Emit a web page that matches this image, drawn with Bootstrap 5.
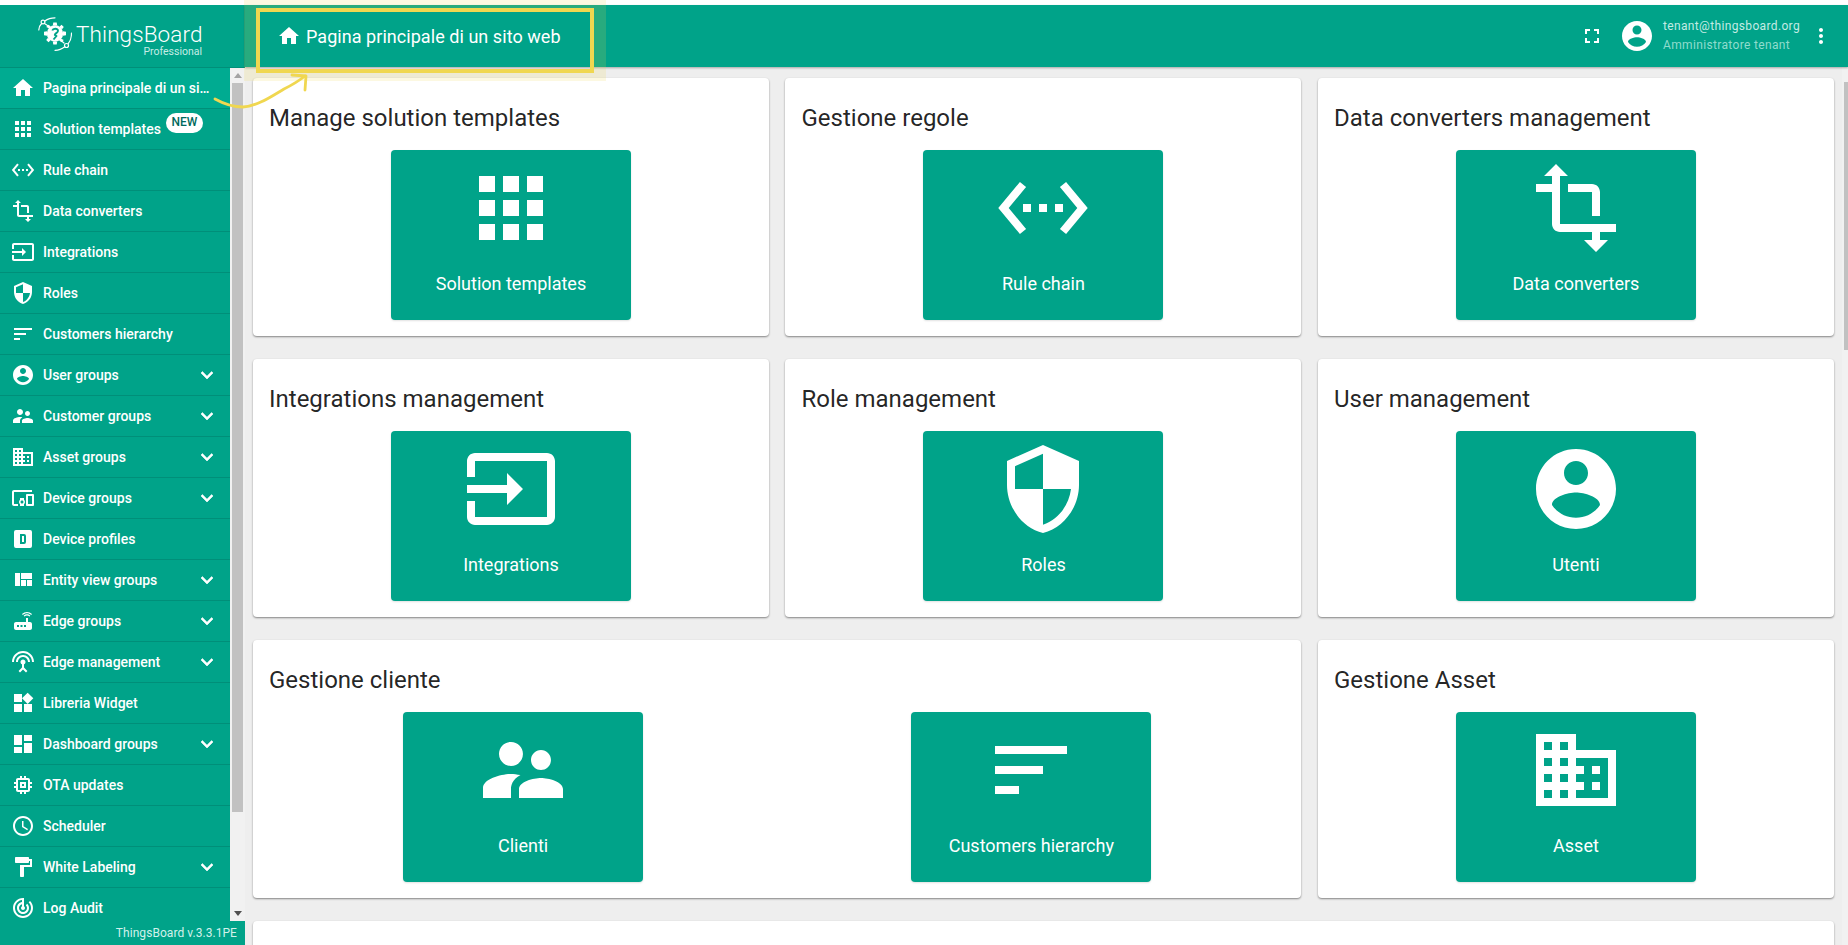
<!DOCTYPE html>
<html lang="it">
<head>
<meta charset="utf-8">
<title>ThingsBoard</title>
<link href="https://cdn.jsdelivr.net/npm/bootstrap@5.3.0/dist/css/bootstrap.min.css" rel="stylesheet">
<style>
html,body{height:100%;}
body{margin:0;overflow:hidden;background:#fff;padding-top:5px;font-family:Roboto,"Liberation Sans",sans-serif;color:rgba(0,0,0,.87);}
.tb-shell{height:940px;background:#eee;position:relative;}
.tb-side{width:245px;background:#00a389;color:#fff;flex:none;}
.tb-brand{height:63px;border-bottom:1px solid #008f79;padding:12px 0 0 38px;}
.tb-brand-name{font-size:22.5px;font-weight:300;line-height:28px;color:#fff;letter-spacing:.1px;}
.tb-brand-sub{font-size:10.5px;line-height:10px;color:#c6ece5;text-align:right;font-weight:400;margin-top:-1px;}
.tb-brand-text{width:126px;margin-left:4px;margin-top:3px;}
.tb-logo{width:34px;height:34px;flex:none;}
.tb-navwrap{flex:1 1 0;min-height:0;}
.tb-list{width:230px;overflow:hidden;border-radius:0;}
.tb-item{height:41px;flex:none;padding:0 11px;background:transparent;color:#fff;border:0;border-bottom:1px solid #008f79;border-radius:0;font-size:14px;font-weight:500;position:relative;text-decoration:none;letter-spacing:0;}
.tb-item.tb-on{background:#00ab91;}
.tb-ico{width:24px;height:24px;fill:#fff;flex:none;}
.tb-label{margin-left:8px;max-width:169px;}
.tb-chev{width:24px;height:24px;fill:#fff;stroke:#fff;stroke-width:.6px;position:absolute;left:194.500px;top:8px;}
.tb-new{position:absolute;left:166px;top:4px;width:37px;height:20px;border-radius:10px;background:#fff;color:#00695c;font-size:12px;font-weight:500;line-height:19px;text-align:center;padding:0;}
.tb-sb{width:15px;background:#f1f1f1;flex:none;}
.tb-sb-up,.tb-sb-down{height:15px;flex:none;}
.tb-tri{width:0;height:0;margin:5px auto 0;border-left:4px solid transparent;border-right:4px solid transparent;}
.tb-tri.up{border-bottom:5px solid #a3a3a3;}
.tb-tri.dn{border-top:5px solid #505050;}
.tb-thumb{background:#c1c1c1;width:11px;height:729px;margin:0 auto;}
.tb-ver{height:24px;flex:none;font-size:12px;line-height:24px;text-align:right;padding-right:8px;color:#d2f1eb;letter-spacing:.05px;}
.tb-main{min-width:0;}
.tb-top{height:62px;background:#00a389;box-shadow:0 1px 2px rgba(0,0,0,.3);color:#fff;flex:none;position:relative;z-index:2;padding:0 15px 0 32px;}
.tb-crumb-ico{width:24px;height:24px;fill:#fff;margin-top:-1px;}
.tb-crumb{font-size:18px;margin-left:5px;letter-spacing:.05px;line-height:24px;margin-top:2px;}
.tb-full{width:24px;height:24px;fill:#fff;}
.tb-ava{width:36px;height:36px;fill:#fff;margin-left:15px;}
.tb-user{margin-left:8px;line-height:19px;font-size:12px;letter-spacing:.35px;}
.tb-mail{color:#c3ebe4;}
.tb-role{color:#8fdccd;}
.tb-kebab{width:24px;height:24px;fill:#fff;margin-left:9px;}
.tb-body{min-height:0;}
.tb-scroll{flex:1 1 0;min-width:0;overflow:hidden;padding:11px 8px 0 8px;}
.tb-grid{--bs-gutter-x:16.5px;--bs-gutter-y:23px;margin-top:0;}
.tb-grid>*{margin-top:0;margin-bottom:23px;}
.tb-card{background:#fff;border-radius:4px;padding:16px;height:258px;box-shadow:0 1px 2px rgba(0,0,0,.45);border:0;}
.tb-title{font-size:24px;line-height:48px;font-weight:400;margin:0 0 8px;color:rgba(0,0,0,.87);}
.tb-tile{width:240px;height:170px;background:#00a389;color:#fff;border-radius:4px;margin:0 auto;padding-top:10px;text-align:center;font-size:18px;font-weight:400;letter-spacing:0;box-shadow:0 1px 2px rgba(0,0,0,.12);}
.tb-tile svg{width:96px;height:96px;fill:#fff;display:block;margin:0 auto;}
.tb-tile-text{margin-top:16px;line-height:24px;}
.tb-rail{width:6px;background:#f1f1f1;flex:none;}
.tb-rail-up{height:15px;}
.tb-rail-thumb{height:268px;width:4px;background:#c1c1c1;margin-left:2px;}
.tb-mark{position:absolute;left:244px;top:-5px;width:362px;height:81px;border:solid rgba(240,215,80,.17);border-width:8px 12px;z-index:5;pointer-events:none;}
.tb-mark-in{height:100%;border:4.5px solid #f0d750;}
.tb-arrow{position:absolute;left:0;top:-5px;width:400px;height:140px;z-index:6;pointer-events:none;}
</style>
</head>
<body>
<svg width="0" height="0" class="position-absolute" aria-hidden="true">
<symbol id="i-home" viewBox="0 0 24 24"><path d="M10 20v-6h4v6h5v-8h3L12 3 2 12h3v8z"/></symbol>
<symbol id="i-apps" viewBox="0 0 24 24"><path d="M4 8h4V4H4v4zm6 12h4v-4h-4v4zm-6 0h4v-4H4v4zm0-6h4v-4H4v4zm6 0h4v-4h-4v4zm6-10v4h4V4h-4zm-6 4h4V4h-4v4zm6 6h4v-4h-4v4zm0 6h4v-4h-4v4z"/></symbol>
<symbol id="i-rule" viewBox="0 0 24 24"><path d="M7.77 6.76L6.23 5.48.82 12l5.41 6.52 1.54-1.28L3.42 12l4.35-5.24zM7 13h2v-2H7v2zm10-2h-2v2h2v-2zm-6 2h2v-2h-2v2zm6.77-7.52l-1.54 1.28L20.58 12l-4.35 5.24 1.54 1.28L23.18 12l-5.41-6.52z"/></symbol>
<symbol id="i-transform" viewBox="0 0 24 24"><path d="M22 18v-2H8V4h2L7 1 4 4h2v2H2v2h4v8c0 1.1.9 2 2 2h8v2h-2l3 3 3-3h-2v-2h4zM10 8h6v6h2V8c0-1.1-.9-2-2-2h-6v2z"/></symbol>
<symbol id="i-input" viewBox="0 0 24 24"><path d="M21 3.01H3c-1.1 0-2 .9-2 2V9h2V4.99h18v14.03H3V15H1v4.01c0 1.1.9 1.98 2 1.98h18c1.1 0 2-.88 2-1.98v-14c0-1.11-.9-2-2-2zM11 16l4-4-4-4v3H1v2h10v3z"/></symbol>
<symbol id="i-shield" viewBox="0 0 24 24"><path d="M12 1L3 5v6c0 5.55 3.84 10.74 9 12 5.16-1.26 9-6.45 9-12V5l-9-4zm0 10.99h7c-.53 4.12-3.28 7.79-7 8.94V12H5V6.3l7-3.11v8.8z"/></symbol>
<symbol id="i-sort" viewBox="0 0 24 24"><path d="M3 18h6v-2H3v2zM3 6v2h18V6H3zm0 7h12v-2H3v2z"/></symbol>
<symbol id="i-user" viewBox="0 0 24 24"><path d="M12 2C6.48 2 2 6.48 2 12s4.48 10 10 10 10-4.48 10-10S17.52 2 12 2zm0 3c1.66 0 3 1.34 3 3s-1.34 3-3 3-3-1.34-3-3 1.34-3 3-3zm0 14.2c-2.5 0-4.71-1.28-6-3.22.03-1.99 4-3.08 6-3.08 1.99 0 5.97 1.09 6 3.08-1.29 1.94-3.5 3.22-6 3.22z"/></symbol>
<symbol id="i-people" viewBox="0 0 24 24"><path d="M16.5 12c1.38 0 2.49-1.12 2.49-2.5S17.88 7 16.5 7C15.12 7 14 8.12 14 9.5s1.12 2.5 2.5 2.5zM9 11c1.66 0 2.99-1.34 2.99-3S10.66 5 9 5C7.34 5 6 6.34 6 8s1.34 3 3 3zm7.5 3c-1.83 0-5.5.92-5.5 2.75V19h11v-2.25c0-1.83-3.67-2.75-5.5-2.75zM9 13c-2.33 0-7 1.17-7 3.5V19h7v-2.25c0-.85.33-2.34 2.37-3.47C10.5 13.1 9.66 13 9 13z"/></symbol>
<symbol id="i-domain" viewBox="0 0 24 24"><path d="M12 7V3H2v18h20V7H12zM6 19H4v-2h2v2zm0-4H4v-2h2v2zm0-4H4V9h2v2zm0-4H4V5h2v2zm4 12H8v-2h2v2zm0-4H8v-2h2v2zm0-4H8V9h2v2zm0-4H8V5h2v2zm10 12h-8v-2h2v-2h-2v-2h2v-2h-2V9h8v10zm-2-8h-2v2h2v-2zm0 4h-2v2h2v-2z"/></symbol>
<symbol id="i-devices" viewBox="0 0 24 24"><path d="M3 6h18V4H3c-1.1 0-2 .9-2 2v12c0 1.1.9 2 2 2h4v-2H3V6zm10 6H9v1.78c-.61.55-1 1.33-1 2.22s.39 1.67 1 2.22V20h4v-1.78c.61-.55 1-1.34 1-2.22s-.39-1.67-1-2.22V12zm-2 5.5c-.83 0-1.5-.67-1.5-1.5s.67-1.5 1.5-1.5 1.5.67 1.5 1.5-.67 1.5-1.5 1.5zM22 8h-6c-.5 0-1 .5-1 1v10c0 .5.5 1 1 1h6c.5 0 1-.5 1-1V9c0-.5-.5-1-1-1zm-1 10h-4v-8h4v8z"/></symbol>
<symbol id="i-dbox" viewBox="0 0 24 24"><path fill-rule="evenodd" d="M9,7V17H13A2,2 0 0,0 15,15V9A2,2 0 0,0 13,7H9M11,9H13V15H11V9M5,3H19A2,2 0 0,1 21,5V19A2,2 0 0,1 19,21H5A2,2 0 0,1 3,19V5A2,2 0 0,1 5,3Z"/></symbol>
<symbol id="i-quilt" viewBox="0 0 24 24"><path d="M10 18h5v-6h-5v6zm-6 0h5V5H4v13zm12 0h5v-6h-5v6zM10 5v6h11V5H10z"/></symbol>
<symbol id="i-router" viewBox="0 0 24 24"><path d="M20.2 5.9l.8-.8C19.6 3.7 17.8 3 16 3s-3.6.7-5 2.1l.8.8C13 4.8 14.5 4.2 16 4.2s3 .6 4.2 1.7zm-.9.8c-.9-.9-2.1-1.4-3.3-1.4s-2.4.5-3.3 1.4l.8.8c.7-.7 1.6-1 2.5-1 .9 0 1.8.3 2.5 1l.8-.8zM19 13h-2V9h-2v4H5c-1.1 0-2 .9-2 2v4c0 1.1.9 2 2 2h14c1.1 0 2-.9 2-2v-4c0-1.1-.9-2-2-2zM8 18H6v-2h2v2zm3.5 0h-2v-2h2v2zm3.5 0h-2v-2h2v2z"/></symbol>
<symbol id="i-antenna" viewBox="0 0 24 24"><path d="M12 5c-3.87 0-7 3.13-7 7h2c0-2.76 2.24-5 5-5s5 2.24 5 5h2c0-3.87-3.13-7-7-7zm1 9.29c.88-.39 1.5-1.26 1.5-2.29 0-1.38-1.12-2.5-2.5-2.5S9.5 10.62 9.5 12c0 1.02.62 1.9 1.5 2.29v3.3L7.59 21 9 22.41l3-3 3 3L16.41 21 13 17.59v-3.3zM12 1C5.93 1 1 5.93 1 12h2c0-4.97 4.03-9 9-9s9 4.03 9 9h2c0-6.07-4.93-11-11-11z"/></symbol>
<symbol id="i-widgets" viewBox="0 0 24 24"><path d="M13 13v8h8v-8h-8zM3 21h8v-8H3v8zM3 3v8h8V3H3zm13.66-1.31L11 7.34 16.66 13l5.66-5.66-5.66-5.65z"/></symbol>
<symbol id="i-dash" viewBox="0 0 24 24"><path d="M3 13h8V3H3v10zm0 8h8v-6H3v6zm10 0h8V11h-8v10zm0-18v6h8V3h-8z"/></symbol>
<symbol id="i-memory" viewBox="0 0 24 24"><path d="M15 9H9v6h6V9zm-2 4h-2v-2h2v2zm8-2V9h-2V7c0-1.1-.9-2-2-2h-2V3h-2v2h-2V3H9v2H7c-1.1 0-2 .9-2 2v2H3v2h2v2H3v2h2v2c0 1.1.9 2 2 2h2v2h2v-2h2v2h2v-2h2c1.1 0 2-.9 2-2v-2h2v-2h-2v-2h2zm-4 6H7V7h10v10z"/></symbol>
<symbol id="i-clock" viewBox="0 0 24 24"><path d="M11.99 2C6.47 2 2 6.48 2 12s4.47 10 9.99 10C17.52 22 22 17.52 22 12S17.52 2 11.99 2zM12 20c-4.42 0-8-3.58-8-8s3.58-8 8-8 8 3.58 8 8-3.58 8-8 8zm.5-13H11v6l5.25 3.15.75-1.23-4.5-2.67z"/></symbol>
<symbol id="i-paint" viewBox="0 0 24 24"><path d="M18 4V3c0-.55-.45-1-1-1H5c-.55 0-1 .45-1 1v4c0 .55.45 1 1 1h12c.55 0 1-.45 1-1V6h1v4H9v11c0 .55.45 1 1 1h2c.55 0 1-.45 1-1v-9h8V4h-3z"/></symbol>
<symbol id="i-track" viewBox="0 0 24 24"><path d="M19.07 4.93l-1.41 1.41C19.1 7.79 20 9.79 20 12c0 4.42-3.58 8-8 8s-8-3.58-8-8c0-4.08 3.05-7.44 7-7.93v2.02C8.16 6.57 6 9.03 6 12c0 3.31 2.69 6 6 6s6-2.69 6-6c0-1.66-.67-3.16-1.76-4.24l-1.41 1.41C15.55 9.9 16 10.89 16 12c0 2.21-1.79 4-4 4s-4-1.79-4-4c0-1.86 1.28-3.41 3-3.86v2.14c-.6.35-1 .98-1 1.72 0 1.1.9 2 2 2s2-.9 2-2c0-.74-.4-1.38-1-1.72V2h-1C6.48 2 2 6.48 2 12s4.48 10 10 10 10-4.48 10-10c0-2.76-1.12-5.26-2.93-7.07z"/></symbol>
<symbol id="i-more" viewBox="0 0 24 24"><path d="M16.59 8.59L12 13.17 7.41 8.59 6 10l6 6 6-6z"/></symbol>
<symbol id="i-full" viewBox="0 0 24 24"><path d="M7 14H5v5h5v-2H7v-3zm-2-4h2V7h3V5H5v5zm12 7h-3v2h5v-5h-2v3zM14 5v2h3v3h2V5h-5z"/></symbol>
<symbol id="i-vert" viewBox="0 0 24 24"><path d="M12 8c1.1 0 2-.9 2-2s-.9-2-2-2-2 .9-2 2 .9 2 2 2zm0 2c-1.1 0-2 .9-2 2s.9 2 2 2 2-.9 2-2-.9-2-2-2zm0 6c-1.1 0-2 .9-2 2s.9 2 2 2 2-.9 2-2-.9-2-2-2z"/></symbol>
</svg>

<div class="tb-shell d-flex">
  <aside class="tb-side d-flex flex-column">
    <div class="tb-brand d-flex align-items-start">
      <svg class="tb-logo" viewBox="0 0 34 34">
        <g fill="none" stroke="#fff" stroke-width="1.200" stroke-linecap="round">
          <path d="M.8 13 C1 10 2 8 3.700 6.500"/><circle cx="5" cy="5" r="1.900"/><path d="M6.800 4 C9.500 2 13 .8 17 .8"/>
          <path d="M33.500 16 C33.500 20 32.500 24 30.300 26.500"/><circle cx="28.500" cy="28.500" r="2"/><path d="M26.800 29.800 C24 32 21 33.300 17 33.300"/>
          <path d="M6.500 6.500 L11 9.500"/><path d="M26 26 L23 23.500"/>
        </g>
        <g fill="#fff">
          <circle cx="17" cy="16.500" r="8.200"/>
          <path d="M15.300 5.500h3.400l.5 3h-4.400zM23.500 7.700l2.300 2.300-1.800 2.300-2.800-2.300zM28 14.800v3.400l-3 .5v-4.400zM25.800 23l-2.300 2.300-2.300-1.800-.1-2.800zM18.700 27.500h-3.400l-.5-3h4.400zM10.500 25.300l-2.300-2.300 1.800-2.300 2.800 2.300zM6 18.200v-3.400l3-.5v4.400zM8.200 10l2.300-2.300 2.300 1.800.1 2.800z"/>
        </g>
        <path d="M14.300 13.500 C15 11.200 19.500 11 20 13.500 C20.400 15.700 17.300 15.800 16.800 18 L18.500 19 L15.500 22.500" fill="none" stroke="#00a389" stroke-width="1.900" stroke-linejoin="round"/>
      </svg>
      <div class="tb-brand-text">
        <div class="tb-brand-name">ThingsBoard</div>
        <div class="tb-brand-sub">Professional</div>
      </div>
    </div>
    <div class="tb-navwrap d-flex">
      <div class="list-group tb-list flex-nowrap">
        <a class="list-group-item tb-item tb-on d-flex align-items-center"><svg class="tb-ico"><use href="#i-home"/></svg><span class="tb-label text-truncate">Pagina principale di un sito web</span></a>
        <a class="list-group-item tb-item d-flex align-items-center"><svg class="tb-ico"><use href="#i-apps"/></svg><span class="tb-label">Solution templates</span><span class="tb-new">NEW</span></a>
        <a class="list-group-item tb-item d-flex align-items-center"><svg class="tb-ico"><use href="#i-rule"/></svg><span class="tb-label">Rule chain</span></a>
        <a class="list-group-item tb-item d-flex align-items-center"><svg class="tb-ico"><use href="#i-transform"/></svg><span class="tb-label">Data converters</span></a>
        <a class="list-group-item tb-item d-flex align-items-center"><svg class="tb-ico"><use href="#i-input"/></svg><span class="tb-label">Integrations</span></a>
        <a class="list-group-item tb-item d-flex align-items-center"><svg class="tb-ico"><use href="#i-shield"/></svg><span class="tb-label">Roles</span></a>
        <a class="list-group-item tb-item d-flex align-items-center"><svg class="tb-ico"><use href="#i-sort"/></svg><span class="tb-label">Customers hierarchy</span></a>
        <a class="list-group-item tb-item d-flex align-items-center"><svg class="tb-ico"><use href="#i-user"/></svg><span class="tb-label">User groups</span><svg class="tb-chev"><use href="#i-more"/></svg></a>
        <a class="list-group-item tb-item d-flex align-items-center"><svg class="tb-ico"><use href="#i-people"/></svg><span class="tb-label">Customer groups</span><svg class="tb-chev"><use href="#i-more"/></svg></a>
        <a class="list-group-item tb-item d-flex align-items-center"><svg class="tb-ico"><use href="#i-domain"/></svg><span class="tb-label">Asset groups</span><svg class="tb-chev"><use href="#i-more"/></svg></a>
        <a class="list-group-item tb-item d-flex align-items-center"><svg class="tb-ico"><use href="#i-devices"/></svg><span class="tb-label">Device groups</span><svg class="tb-chev"><use href="#i-more"/></svg></a>
        <a class="list-group-item tb-item d-flex align-items-center"><svg class="tb-ico"><use href="#i-dbox"/></svg><span class="tb-label">Device profiles</span></a>
        <a class="list-group-item tb-item d-flex align-items-center"><svg class="tb-ico"><use href="#i-quilt"/></svg><span class="tb-label">Entity view groups</span><svg class="tb-chev"><use href="#i-more"/></svg></a>
        <a class="list-group-item tb-item d-flex align-items-center"><svg class="tb-ico"><use href="#i-router"/></svg><span class="tb-label">Edge groups</span><svg class="tb-chev"><use href="#i-more"/></svg></a>
        <a class="list-group-item tb-item d-flex align-items-center"><svg class="tb-ico"><use href="#i-antenna"/></svg><span class="tb-label">Edge management</span><svg class="tb-chev"><use href="#i-more"/></svg></a>
        <a class="list-group-item tb-item d-flex align-items-center"><svg class="tb-ico"><use href="#i-widgets"/></svg><span class="tb-label">Libreria Widget</span></a>
        <a class="list-group-item tb-item d-flex align-items-center"><svg class="tb-ico"><use href="#i-dash"/></svg><span class="tb-label">Dashboard groups</span><svg class="tb-chev"><use href="#i-more"/></svg></a>
        <a class="list-group-item tb-item d-flex align-items-center"><svg class="tb-ico"><use href="#i-memory"/></svg><span class="tb-label">OTA updates</span></a>
        <a class="list-group-item tb-item d-flex align-items-center"><svg class="tb-ico"><use href="#i-clock"/></svg><span class="tb-label">Scheduler</span></a>
        <a class="list-group-item tb-item d-flex align-items-center"><svg class="tb-ico"><use href="#i-paint"/></svg><span class="tb-label">White Labeling</span><svg class="tb-chev"><use href="#i-more"/></svg></a>
        <a class="list-group-item tb-item d-flex align-items-center"><svg class="tb-ico"><use href="#i-track"/></svg><span class="tb-label">Log Audit</span></a>
      </div>
      <div class="tb-sb d-flex flex-column">
        <div class="tb-sb-up"><div class="tb-tri up"></div></div>
        <div class="tb-thumb"></div>
        <div class="flex-grow-1"></div>
        <div class="tb-sb-down"><div class="tb-tri dn"></div></div>
      </div>
    </div>
    <div class="tb-ver">ThingsBoard v.3.3.1PE</div>
  </aside>

  <div class="tb-main flex-grow-1 d-flex flex-column">
    <header class="tb-top d-flex align-items-center">
      <svg class="tb-crumb-ico"><use href="#i-home"/></svg>
      <span class="tb-crumb">Pagina principale di un sito web</span>
      <svg class="tb-full ms-auto"><use href="#i-full"/></svg>
      <svg class="tb-ava"><use href="#i-user"/></svg>
      <div class="tb-user">
        <div class="tb-mail">tenant@thingsboard.org</div>
        <div class="tb-role">Amministratore tenant</div>
      </div>
      <svg class="tb-kebab"><use href="#i-vert"/></svg>
    </header>
    <div class="tb-body flex-grow-1 d-flex">
      <main class="tb-scroll">
        <div class="row tb-grid">
          <div class="col-4"><section class="tb-card"><h2 class="tb-title">Manage solution templates</h2><div class="tb-tile"><svg><use href="#i-apps"/></svg><div class="tb-tile-text">Solution templates</div></div></section></div>
          <div class="col-4"><section class="tb-card"><h2 class="tb-title">Gestione regole</h2><div class="tb-tile"><svg><use href="#i-rule"/></svg><div class="tb-tile-text">Rule chain</div></div></section></div>
          <div class="col-4"><section class="tb-card"><h2 class="tb-title">Data converters management</h2><div class="tb-tile"><svg><use href="#i-transform"/></svg><div class="tb-tile-text">Data converters</div></div></section></div>
          <div class="col-4"><section class="tb-card"><h2 class="tb-title">Integrations management</h2><div class="tb-tile"><svg><use href="#i-input"/></svg><div class="tb-tile-text">Integrations</div></div></section></div>
          <div class="col-4"><section class="tb-card"><h2 class="tb-title">Role management</h2><div class="tb-tile"><svg><use href="#i-shield"/></svg><div class="tb-tile-text">Roles</div></div></section></div>
          <div class="col-4"><section class="tb-card"><h2 class="tb-title">User management</h2><div class="tb-tile"><svg><use href="#i-user"/></svg><div class="tb-tile-text">Utenti</div></div></section></div>
          <div class="col-8"><section class="tb-card"><h2 class="tb-title">Gestione cliente</h2>
            <div class="d-flex">
              <div class="w-50"><div class="tb-tile"><svg><use href="#i-people"/></svg><div class="tb-tile-text">Clienti</div></div></div>
              <div class="w-50"><div class="tb-tile"><svg><use href="#i-sort"/></svg><div class="tb-tile-text">Customers hierarchy</div></div></div>
            </div></section></div>
          <div class="col-4"><section class="tb-card"><h2 class="tb-title">Gestione Asset</h2><div class="tb-tile"><svg><use href="#i-domain"/></svg><div class="tb-tile-text">Asset</div></div></section></div>
          <div class="col-12"><section class="tb-card"></section></div>
        </div>
      </main>
      <div class="tb-rail">
        <div class="tb-rail-up"></div>
        <div class="tb-rail-thumb"></div>
      </div>
    </div>
  </div>

  <div class="tb-mark"><div class="tb-mark-in"></div></div>
  <svg class="tb-arrow" viewBox="0 0 400 140" fill="none" stroke="#f0d750" stroke-width="2.800" stroke-linecap="round" stroke-linejoin="round">
    <path d="M215 99 C224 104 233 107 243 107 C258 106 272 96 284 89 C292 85 300 80 305 76"/>
    <path d="M292 75 L306 76 L305 90"/>
  </svg>
</div>
<script src="https://cdn.jsdelivr.net/npm/bootstrap@5.3.0/dist/js/bootstrap.bundle.min.js"></script>
</body>
</html>
